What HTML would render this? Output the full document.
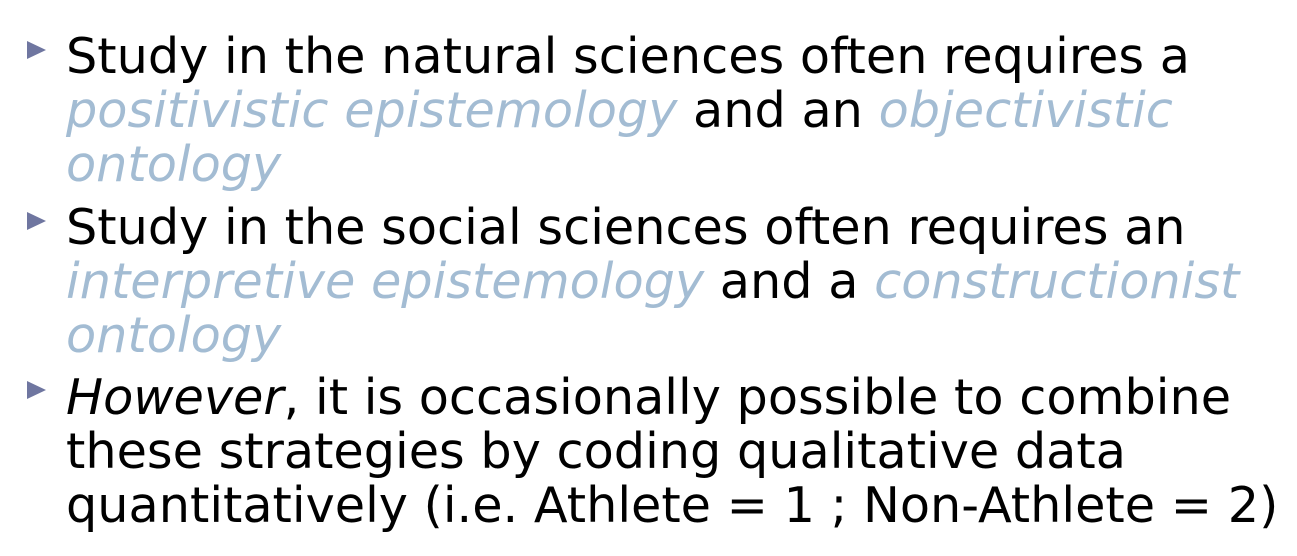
<!DOCTYPE html>
<html><head><style>
body{margin:0;width:1297px;height:556px;background:#fff;overflow:hidden;font-family:"DejaVu Sans","Liberation Sans",sans-serif;}
.p{position:absolute;left:66px;font-size:49.3px;line-height:54px;color:#000;white-space:nowrap;}
.b{position:absolute;left:27px;width:0;height:0;border-top:9px solid transparent;border-bottom:9px solid transparent;border-left:19px solid #6f76a0;}
i{color:#a3bcd3;}
i.k{color:#000;}
</style></head><body>
<div class="b" style="top:41px"></div>
<div class="p" style="top:29px">Study in the natural sciences often requires a<br><i>positivistic epistemology</i> and an <i>objectivistic</i><br><i>ontology</i></div>
<div class="b" style="top:212px"></div>
<div class="p" style="top:200px">Study in the social sciences often requires an<br><i>interpretive epistemology</i> and a <i>constructionist</i><br><i>ontology</i></div>
<div class="b" style="top:381px"></div>
<div class="p" style="top:370px"><i class="k">However</i>, it is occasionally possible to combine<br>these strategies by coding qualitative data<br>quantitatively (i.e. Athlete = 1 ; Non-Athlete = 2)</div>
</body></html>
